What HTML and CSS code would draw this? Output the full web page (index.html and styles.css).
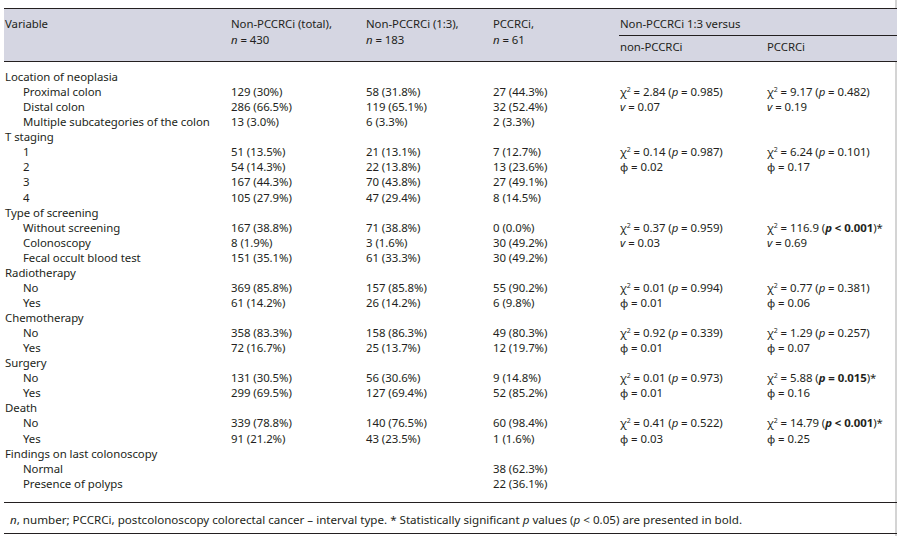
FILE: index.html
```html
<!DOCTYPE html>
<html>
<head>
<meta charset="utf-8">
<link rel="stylesheet" href="styles.css">
</head>
<body>
<div class="page">
<table class="tbl">
<colgroup>
<col class="c1"><col class="c2"><col class="c3"><col class="c4"><col class="c5"><col class="c6">
</colgroup>
<thead>
<tr class="h1">
<th rowspan="2">Variable</th>
<th rowspan="2">Non-PCCRCi (total),<br><i>n</i> = 430</th>
<th rowspan="2">Non-PCCRCi (1:3),<br><i>n</i> = 183</th>
<th rowspan="2">PCCRCi,<br><i>n</i> = 61</th>
<th colspan="2" class="grp">Non-PCCRCi 1:3 versus</th>
</tr>
<tr class="h2">
<th>non-PCCRCi</th>
<th>PCCRCi</th>
</tr>
</thead>
<tbody>
<tr class="first"><td>Location of neoplasia</td><td></td><td></td><td></td><td></td><td></td></tr>
<tr><td class="in">Proximal colon</td><td>129 (30%)</td><td>58 (31.8%)</td><td>27 (44.3%)</td><td>χ<sup>2</sup> = 2.84 (<i>p</i> = 0.985)</td><td>χ<sup>2</sup> = 9.17 (<i>p</i> = 0.482)</td></tr>
<tr><td class="in">Distal colon</td><td>286 (66.5%)</td><td>119 (65.1%)</td><td>32 (52.4%)</td><td><i>v</i> = 0.07</td><td><i>v</i> = 0.19</td></tr>
<tr><td class="in">Multiple subcategories of the colon</td><td>13 (3.0%)</td><td>6 (3.3%)</td><td>2 (3.3%)</td><td></td><td></td></tr>
<tr><td>T staging</td><td></td><td></td><td></td><td></td><td></td></tr>
<tr><td class="in">1</td><td>51 (13.5%)</td><td>21 (13.1%)</td><td>7 (12.7%)</td><td>χ<sup>2</sup> = 0.14 (<i>p</i> = 0.987)</td><td>χ<sup>2</sup> = 6.24 (<i>p</i> = 0.101)</td></tr>
<tr><td class="in">2</td><td>54 (14.3%)</td><td>22 (13.8%)</td><td>13 (23.6%)</td><td>φ = 0.02</td><td>φ = 0.17</td></tr>
<tr><td class="in">3</td><td>167 (44.3%)</td><td>70 (43.8%)</td><td>27 (49.1%)</td><td></td><td></td></tr>
<tr><td class="in">4</td><td>105 (27.9%)</td><td>47 (29.4%)</td><td>8 (14.5%)</td><td></td><td></td></tr>
<tr><td>Type of screening</td><td></td><td></td><td></td><td></td><td></td></tr>
<tr><td class="in">Without screening</td><td>167 (38.8%)</td><td>71 (38.8%)</td><td>0 (0.0%)</td><td>χ<sup>2</sup> = 0.37 (<i>p</i> = 0.959)</td><td>χ<sup>2</sup> = 116.9 (<b><i>p</i> &lt; 0.001</b>)*</td></tr>
<tr><td class="in">Colonoscopy</td><td>8 (1.9%)</td><td>3 (1.6%)</td><td>30 (49.2%)</td><td><i>v</i> = 0.03</td><td><i>v</i> = 0.69</td></tr>
<tr><td class="in">Fecal occult blood test</td><td>151 (35.1%)</td><td>61 (33.3%)</td><td>30 (49.2%)</td><td></td><td></td></tr>
<tr><td>Radiotherapy</td><td></td><td></td><td></td><td></td><td></td></tr>
<tr><td class="in">No</td><td>369 (85.8%)</td><td>157 (85.8%)</td><td>55 (90.2%)</td><td>χ<sup>2</sup> = 0.01 (<i>p</i> = 0.994)</td><td>χ<sup>2</sup> = 0.77 (<i>p</i> = 0.381)</td></tr>
<tr><td class="in">Yes</td><td>61 (14.2%)</td><td>26 (14.2%)</td><td>6 (9.8%)</td><td>φ = 0.01</td><td>φ = 0.06</td></tr>
<tr><td>Chemotherapy</td><td></td><td></td><td></td><td></td><td></td></tr>
<tr><td class="in">No</td><td>358 (83.3%)</td><td>158 (86.3%)</td><td>49 (80.3%)</td><td>χ<sup>2</sup> = 0.92 (<i>p</i> = 0.339)</td><td>χ<sup>2</sup> = 1.29 (<i>p</i> = 0.257)</td></tr>
<tr><td class="in">Yes</td><td>72 (16.7%)</td><td>25 (13.7%)</td><td>12 (19.7%)</td><td>φ = 0.01</td><td>φ = 0.07</td></tr>
<tr><td>Surgery</td><td></td><td></td><td></td><td></td><td></td></tr>
<tr><td class="in">No</td><td>131 (30.5%)</td><td>56 (30.6%)</td><td>9 (14.8%)</td><td>χ<sup>2</sup> = 0.01 (<i>p</i> = 0.973)</td><td>χ<sup>2</sup> = 5.88 (<b><i>p</i> = 0.015</b>)*</td></tr>
<tr><td class="in">Yes</td><td>299 (69.5%)</td><td>127 (69.4%)</td><td>52 (85.2%)</td><td>φ = 0.01</td><td>φ = 0.16</td></tr>
<tr><td>Death</td><td></td><td></td><td></td><td></td><td></td></tr>
<tr><td class="in">No</td><td>339 (78.8%)</td><td>140 (76.5%)</td><td>60 (98.4%)</td><td>χ<sup>2</sup> = 0.41 (<i>p</i> = 0.522)</td><td>χ<sup>2</sup> = 14.79 (<b><i>p</i> &lt; 0.001</b>)*</td></tr>
<tr><td class="in">Yes</td><td>91 (21.2%)</td><td>43 (23.5%)</td><td>1 (1.6%)</td><td>φ = 0.03</td><td>φ = 0.25</td></tr>
<tr><td>Findings on last colonoscopy</td><td></td><td></td><td></td><td></td><td></td></tr>
<tr><td class="in">Normal</td><td></td><td></td><td>38 (62.3%)</td><td></td><td></td></tr>
<tr class="last"><td class="in">Presence of polyps</td><td></td><td></td><td>22 (36.1%)</td><td></td><td></td></tr>
</tbody>
</table>
<p class="note"><i>n</i>, number; PCCRCi, postcolonoscopy colorectal cancer – interval type. * Statistically significant <i>p</i> values (<i>p</i> &lt; 0.05) are presented in bold.</p>
</div>
</body>
</html>
```
FILE: styles.css
```css
html, body {
  margin: 0;
  padding: 0;
  background: #ffffff;
}
body {
  font-family: "Noto Sans", "Open Sans", sans-serif;
  font-size: 11.4px;
  color: #231f20;
}
.page {
  width: 897px;
  padding: 8px 0 6px 4px;
  box-sizing: border-box;
  border-right: 2px solid #d4d4d4;
  min-height: 536px;
}
.tbl {
  width: 893px;
  border-collapse: collapse;
  table-layout: fixed;
  letter-spacing: -0.05px;
}
.c1 { width: 226px; }
.c2 { width: 135px; }
.c3 { width: 127px; }
.c4 { width: 127px; }
.c5 { width: 147px; }
.c6 { width: 131px; }
thead th {
  background: #d5d6e2;
  font-weight: normal;
  text-align: left;
  vertical-align: top;
  padding: 0 0 0 1px;
  line-height: 16px;
}
thead {
  border-top: 1.5px solid #231f20;
  border-bottom: 1.5px solid #231f20;
}
.h1 th {
  padding-top: 7px;
}
.h1 .grp {
  height: 27px;
  box-sizing: border-box;
  border-bottom: 1.2px solid #231f20;
}
.h2 th {
  height: 26px;
  padding-top: 3px;
  box-sizing: border-box;
}
tbody td {
  padding: 0 0 0 1px;
  line-height: 15.07px;
  height: 15.07px;
  white-space: nowrap;
  vertical-align: middle;
}
tbody td.in {
  padding-left: 19px;
}
tbody tr.first td {
  padding-top: 7px;
}
tbody tr.last td {
  padding-bottom: 11px;
}
tbody {
  border-bottom: 1.5px solid #231f20;
}
sup {
  font-size: 7px;
  line-height: 0;
  vertical-align: 4px;
}
b { font-weight: bold; }
.note {
  margin: 0;
  width: 893px;
  padding: 9px 0 6px 6px;
  box-sizing: border-box;
  border-bottom: 1.5px solid #231f20;
  font-size: 11.6px;
  letter-spacing: 0;
  line-height: 15px;
}
```
